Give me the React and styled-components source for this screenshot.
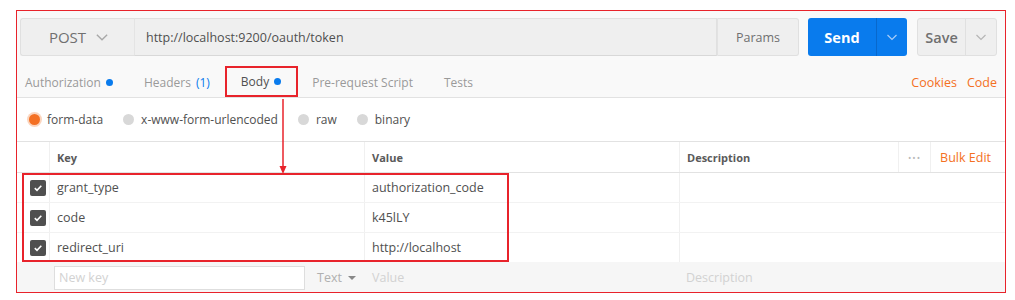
import React from 'react'
import styled, { createGlobalStyle, css } from 'styled-components'

const GlobalStyle = createGlobalStyle`
  body {
    margin: 0;
    background: #fff;
    font-family: "Open Sans", "Noto Sans", sans-serif;
  }
`

const BLUE = '#097bed'
const ORANGE = '#f47023'
const RED = '#e8232b'

function Chevron({ color = '#aaa', size = 14 }) {
  return (
    <svg width={size} height={size} viewBox="0 0 14 14">
      <path d="M2.5 5 L7 9.5 L11.5 5" fill="none" stroke={color} strokeWidth="1.2" />
    </svg>
  )
}

function Check() {
  return (
    <svg width="10" height="10" viewBox="0 0 10 10">
      <path d="M1.8 5.2 L4 7.3 L8.3 2.8" fill="none" stroke="#fff" strokeWidth="1.6" />
    </svg>
  )
}

const rows = [
  { key: 'grant_type', value: 'authorization_code' },
  { key: 'code', value: 'k45lLY' },
  { key: 'redirect_uri', value: 'http://localhost' },
]

export default function App() {
  return (
    <>
      <GlobalStyle />
      <Frame>
        <Header>
          <UrlRow>
            <Method>
              <span>POST</span>
              <Chevron color="#a8a8a8" size={16} />
            </Method>
            <UrlInput>http://localhost:9200/oauth/token</UrlInput>
            <ParamsBtn>Params</ParamsBtn>
            <SplitBtn primary>
              <span>Send</span>
              <Caret primary><Chevron color="#a9cdf7" /></Caret>
            </SplitBtn>
            <SplitBtn>
              <span>Save</span>
              <Caret><Chevron color="#b5b5b5" /></Caret>
            </SplitBtn>
          </UrlRow>
          <Tabs>
            <Tab>Authorization <Dot /></Tab>
            <Tab>Headers <Count>(1)</Count></Tab>
            <Tab active>Body <Dot /></Tab>
            <Tab>Pre-request Script</Tab>
            <Tab>Tests</Tab>
            <Spacer />
            <Link>Cookies</Link>
            <Link>Code</Link>
          </Tabs>
        </Header>

        <Radios>
          <Radio checked>form-data</Radio>
          <Radio>x-www-form-urlencoded</Radio>
          <Radio>raw</Radio>
          <Radio>binary</Radio>
        </Radios>

        <Table>
          <HeadRow>
            <CheckCell />
            <HeadCell>Key</HeadCell>
            <HeadCell>Value</HeadCell>
            <HeadCell>
              <span>Description</span>
              <HeadTools>
                <Dots>•••</Dots>
                <Link>Bulk Edit</Link>
              </HeadTools>
            </HeadCell>
          </HeadRow>
          <Group>
            {rows.map(r => (
              <Row key={r.key}>
                <CheckCell><Box><Check /></Box></CheckCell>
                <Cell>{r.key}</Cell>
                <Cell>{r.value}</Cell>
                <Cell />
              </Row>
            ))}
          </Group>
          <NewRow>
            <CheckCell />
            <Cell>
              <NewKey>New key</NewKey>
              <TypeSel>Text <Tri /></TypeSel>
            </Cell>
            <Cell muted>Value</Cell>
            <Cell muted>Description</Cell>
          </NewRow>
        </Table>

        <Arrow width="10" height="76" viewBox="0 0 10 76">
          <line x1="5" y1="0" x2="5" y2="68" stroke={RED} strokeWidth="1.5" />
          <path d="M1.5 67 L5 75 L8.5 67 Z" fill={RED} />
        </Arrow>
      </Frame>
    </>
  )
}

const Frame = styled.div`
  position: relative;
  box-sizing: border-box;
  width: 990px;
  height: 283px;
  margin: 10px 0 0 16px;
  border: 1.5px solid ${RED};
  background: #fff;
  overflow: hidden;
`

const Header = styled.div`
  background: #f9f9f9;
  padding: 7px 8px 0 3px;
  border-bottom: 1px solid #e2e2e2;
`

const UrlRow = styled.div`
  display: flex;
  align-items: stretch;
  height: 38px;
`

const Method = styled.div`
  box-sizing: border-box;
  width: 114px;
  display: flex;
  align-items: center;
  justify-content: center;
  gap: 8px;
  background: #efefef;
  border: 1px solid #e0e0e0;
  border-right: none;
  border-radius: 3px 0 0 3px;
  color: #707070;
  font-size: 15px;
  padding-left: 4px;
`

const UrlInput = styled.div`
  flex: 1;
  display: flex;
  align-items: center;
  padding-left: 11px;
  background: #efefef;
  border: 1px solid #e0e0e0;
  border-left-color: #e4e4e4;
  border-bottom-color: #d8d8d8;
  color: #505050;
  font-size: 12.5px;
`

const ParamsBtn = styled.div`
  box-sizing: border-box;
  width: 82px;
  display: flex;
  align-items: center;
  justify-content: center;
  background: #efefef;
  border: 1px solid #e0e0e0;
  border-left-color: #e2e2e2;
  border-radius: 0 3px 3px 0;
  color: #707070;
  font-size: 12.5px;
  margin-right: 9px;
`

const SplitBtn = styled.div`
  box-sizing: border-box;
  display: flex;
  align-items: stretch;
  border-radius: 3px;
  ${p => p.primary ? css`
    width: 99px;
    background: ${BLUE};
    color: #fff;
    font-weight: 700;
    margin-right: 10px;
  ` : css`
    width: 80px;
    background: #efefef;
    border: 1px solid #e0e0e0;
    color: #707070;
    font-weight: 600;
  `}
  font-size: 14.5px;
  span {
    flex: 1;
    display: flex;
    align-items: center;
    justify-content: center;
  }
`

const Caret = styled.div`
  width: 30px;
  display: flex;
  align-items: center;
  justify-content: center;
  border-left: 1px solid ${p => p.primary ? '#0868cc' : '#e0e0e0'};
`

const Tabs = styled.div`
  display: flex;
  align-items: stretch;
  height: 30px;
  margin-top: 11px;
  padding-left: 4px;
  font-size: 12px;
`

const Tab = styled.div`
  position: relative;
  display: flex;
  align-items: center;
  gap: 5px;
  padding: 0 16px 0 15px;
  color: ${p => p.active ? '#505050' : '#9a9a9a'};
  &:first-child { padding-left: 1px; }
  ${p => p.active && css`
    border-bottom: 2px solid ${ORANGE};
    &::after {
      content: "";
      position: absolute;
      inset: -1px -1px -2px -1px;
      border: 2px solid ${RED};
    }
  `}
`

const Dot = styled.i`
  width: 7px;
  height: 7px;
  border-radius: 50%;
  background: ${BLUE};
`

const Count = styled.span`
  color: ${BLUE};
`

const Spacer = styled.div`
  flex: 1;
`

const Link = styled.span`
  display: flex;
  align-items: center;
  color: ${ORANGE};
  font-size: 12.5px;
  margin-left: 10px;
`

const Radios = styled.div`
  display: flex;
  align-items: center;
  height: 43px;
  padding-left: 12px;
  gap: 20px;
  font-size: 12px;
  color: #505050;
`

const Radio = styled.label`
  display: flex;
  align-items: center;
  gap: 7px;
  &::before {
    content: "";
    width: 11px;
    height: 11px;
    border-radius: 50%;
    background: ${p => p.checked ? ORANGE : '#d8d8d8'};
    box-shadow: ${p => p.checked ? '0 0 0 2px #fbd5be' : 'none'};
    box-sizing: border-box;
  }
`

const Table = styled.div`
  font-size: 12px;
  color: #505050;
`

const gridRow = css`
  display: grid;
  grid-template-columns: 32px 315px 315px 1fr;
`

const HeadRow = styled.div`
  ${gridRow}
  height: 30px;
  border-top: 1px solid #e2e2e2;
  border-bottom: 1px solid #e2e2e2;
  font-size: 11px;
  font-weight: 700;
  color: #5a5a5a;
`

const HeadCell = styled.div`
  display: flex;
  align-items: center;
  padding-left: 7px;
  border-left: 1px solid #f0f0f0;
  > span { flex: 1; }
`

const HeadTools = styled.div`
  display: flex;
  align-items: stretch;
  height: 100%;
  font-weight: 400;
  ${Link} {
    font-size: 12.5px;
    margin: 0;
    padding: 0 14px 0 9px;
    border-left: 1px solid #f0f0f0;
  }
`

const Dots = styled.span`
  display: flex;
  align-items: center;
  padding: 0 9px;
  border-left: 1px solid #f0f0f0;
  color: #b8b8b8;
  font-size: 9px;
  letter-spacing: 1px;
`

const Group = styled.div`
  position: relative;
  &::after {
    content: "";
    position: absolute;
    left: 5px;
    top: 0;
    width: 487px;
    bottom: 0;
    border: 2px solid ${RED};
    box-sizing: border-box;
    pointer-events: none;
  }
`

const Row = styled.div`
  ${gridRow}
  height: 29px;
  border-bottom: 1px solid #f2f2f2;
  &:last-child { border-bottom: none; }
`

const CheckCell = styled.div`
  display: flex;
  align-items: center;
  justify-content: center;
  padding-left: 9px;
`

const Box = styled.div`
  width: 16px;
  height: 16px;
  border-radius: 2px;
  background: #4f4f4f;
  display: flex;
  align-items: center;
  justify-content: center;
`

const Cell = styled.div`
  display: flex;
  align-items: center;
  padding-left: 7px;
  border-left: 1px solid #f0f0f0;
  font-size: 12.5px;
  color: ${p => p.muted ? '#d2d2d2' : '#505050'};
`

const NewRow = styled.div`
  ${gridRow}
  height: 31px;
  background: #f6f6f6;
  ${Cell} { border-left: none; }
  > ${Cell}:nth-child(2) { padding-left: 5px; }
  > ${Cell}:nth-child(3) { padding-left: 8px; }
`

const NewKey = styled.div`
  box-sizing: border-box;
  width: 251px;
  height: 24px;
  display: flex;
  align-items: center;
  padding-left: 4px;
  background: #fff;
  border: 1px solid #dedede;
  color: #d2d2d2;
  font-size: 12.5px;
`

const TypeSel = styled.span`
  display: flex;
  align-items: center;
  gap: 6px;
  color: #b0b0b0;
  margin-left: 12px;
`

const Tri = styled.i`
  width: 0;
  height: 0;
  border-left: 4px solid transparent;
  border-right: 4px solid transparent;
  border-top: 4px solid #888;
`

const Arrow = styled.svg`
  position: absolute;
  left: 261px;
  top: 88px;
`
